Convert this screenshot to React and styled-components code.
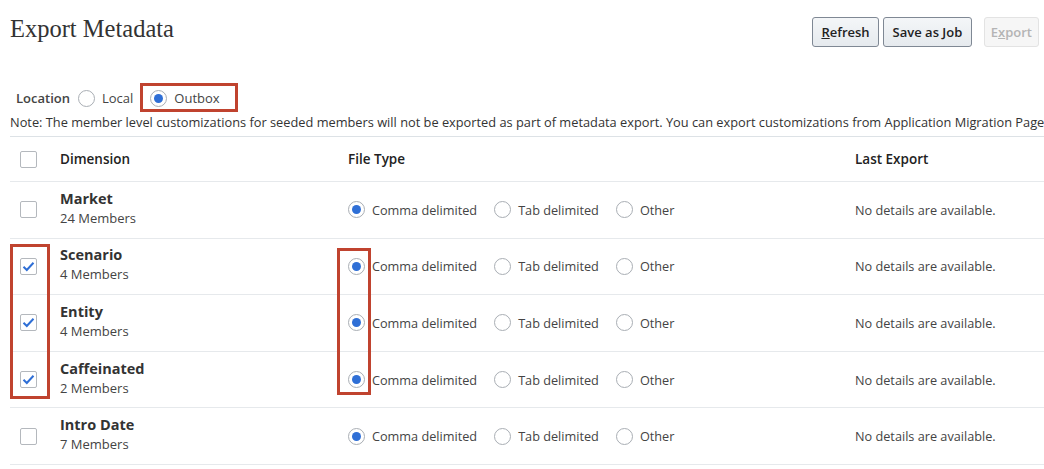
import React from "react";
import styled, { createGlobalStyle } from "styled-components";

const GlobalStyle = createGlobalStyle`
  body {
    margin: 0;
    background: #fff;
    font-family: "Open Sans", "Noto Sans", sans-serif;
    color: #333;
  }
`;

const Page = styled.div`
  width: 1044px;
  padding: 0 0 0 10px;
  box-sizing: border-box;
`;

const Header = styled.div`
  display: flex;
  justify-content: space-between;
  align-items: flex-start;
  height: 82px;
  padding-top: 12px;
  box-sizing: border-box;
`;

const Title = styled.h1`
  margin: 2px 0 0;
  font-family: "Liberation Serif", "DejaVu Serif", serif;
  font-weight: normal;
  font-size: 24.5px;
  color: #333;
  line-height: 30px;
`;

const Toolbar = styled.div`
  display: flex;
  gap: 4px;
  padding-top: 5px;
  padding-right: 5px;
`;

const Button = styled.button`
  height: 30px;
  padding: 0 ${({ disabled }) => (disabled ? 6 : 8.5)}px;
  font-family: "Open Sans", sans-serif;
  font-size: 13px;
  font-weight: 600;
  border-radius: 3px;
  border: 1px solid ${({ disabled }) => (disabled ? "#e3e3e3" : "#7f8894")};
  background: ${({ disabled }) =>
    disabled ? "#f6f6f6" : "linear-gradient(#f4f6f8, #e6eaee)"};
  color: ${({ disabled }) => (disabled ? "#b4b4b4" : "#222")};
  margin-left: ${({ gapLeft }) => gapLeft || 0}px;
  cursor: pointer;
`;

const LocationRow = styled.div`
  display: flex;
  align-items: center;
  height: 32px;
  padding-left: 6px;
  font-size: 13px;
`;

const Label = styled.span`
  font-weight: 600;
  color: #444;
  margin-right: 8px;
`;

const Option = styled.label`
  position: relative;
  display: flex;
  align-items: center;
  gap: 7px;
  color: #444;
  margin-right: ${({ mr }) => mr || 0}px;
`;

const RadioCircle = styled.span`
  width: 15px;
  height: 15px;
  border-radius: 50%;
  border: 1px solid #a9aeb4;
  background: #fff;
  display: flex;
  align-items: center;
  justify-content: center;
  flex-shrink: 0;
  &::after {
    content: "";
    width: 9px;
    height: 9px;
    border-radius: 50%;
    background: ${({ checked }) => (checked ? "#2f6fd6" : "transparent")};
  }
`;

const Highlight = styled.span`
  position: absolute;
  border: 3px solid #c0432f;
  pointer-events: none;
`;

const Note = styled.div`
  font-size: 12.8px;
  color: #333;
  line-height: 16px;
  padding-bottom: 6px;
  white-space: nowrap;
  border-bottom: 1px solid #dde2e6;
`;

const Table = styled.div`
  position: relative;
`;

const Row = styled.div`
  display: grid;
  grid-template-columns: 40px 287px 508px 1fr;
  align-items: center;
  box-sizing: border-box;
  height: ${({ head }) => (head ? 45 : 56.6)}px;
  border-bottom: 1px solid #e6e9ec;
`;

const Cell = styled.div`
  padding-left: ${({ pl }) => pl || 0}px;
  display: flex;
  flex-direction: column;
`;

const Box = styled.span`
  width: 15px;
  height: 15px;
  border: 1px solid #b4b8bd;
  border-radius: 2px;
  background: #fff;
  display: flex;
  align-items: center;
  justify-content: center;
`;

const HeadText = styled.span`
  font-size: 13.5px;
  font-weight: 600;
  color: #222;
`;

const Name = styled.span`
  font-size: 14.5px;
  font-weight: 700;
  color: #333;
  line-height: 19px;
  margin-top: -3px;
`;

const Members = styled.span`
  font-size: 13px;
  color: #444;
  line-height: 19px;
  margin-top: 1px;
`;

const Radios = styled.div`
  display: flex;
  align-items: center;
  font-size: 12.7px;
`;

const Details = styled.span`
  font-size: 12.7px;
  color: #444;
`;

const Checkbox = ({ checked }) => (
  <Box>
    {checked && (
      <svg width="13" height="11" viewBox="0 0 13 11">
        <path
          d="M1.5 5.8 L4.8 9 L11.5 1.8"
          fill="none"
          stroke="#2f6fd6"
          strokeWidth="2"
        />
      </svg>
    )}
  </Box>
);

const rows = [
  { name: "Market", members: "24 Members", checked: false },
  { name: "Scenario", members: "4 Members", checked: true },
  { name: "Entity", members: "4 Members", checked: true },
  { name: "Caffeinated", members: "2 Members", checked: true },
  { name: "Intro Date", members: "7 Members", checked: false },
];

export default function App() {
  return (
    <>
      <GlobalStyle />
      <Page>
        <Header>
          <Title>Export Metadata</Title>
          <Toolbar>
            <Button>
              <u>R</u>efresh
            </Button>
            <Button>Save as Job</Button>
            <Button disabled gapLeft={8}>
              E<u>x</u>port
            </Button>
          </Toolbar>
        </Header>
        <LocationRow>
          <Label>Location</Label>
          <Option mr={17}>
            <RadioCircle />
            Local
          </Option>
          <Option>
            <Highlight style={{ left: -10, top: -6, width: 92, height: 23 }} />
            <RadioCircle checked />
            Outbox
          </Option>
        </LocationRow>
        <Note>
          Note: The member level customizations for seeded members will not be
          exported as part of metadata export. You can export customizations
          from Application Migration Page
        </Note>
        <Table>
          <Row head>
            <Cell pl={10}>
              <Checkbox />
            </Cell>
            <Cell pl={10}>
              <HeadText>Dimension</HeadText>
            </Cell>
            <Cell pl={11}>
              <HeadText>File Type</HeadText>
            </Cell>
            <Cell pl={10}>
              <HeadText>Last Export</HeadText>
            </Cell>
          </Row>
          {rows.map((r) => (
            <Row key={r.name}>
              <Cell pl={10}>
                <Checkbox checked={r.checked} />
              </Cell>
              <Cell pl={10}>
                <Name>{r.name}</Name>
                <Members>{r.members}</Members>
              </Cell>
              <Cell pl={11}>
                <Radios>
                  <Option mr={17}>
                    <RadioCircle checked />
                    Comma delimited
                  </Option>
                  <Option mr={17}>
                    <RadioCircle />
                    Tab delimited
                  </Option>
                  <Option>
                    <RadioCircle />
                    Other
                  </Option>
                </Radios>
              </Cell>
              <Cell pl={10}>
                <Details>No details are available.</Details>
              </Cell>
            </Row>
          ))}
          <Highlight style={{ left: 0, top: 107, width: 34, height: 149 }} />
          <Highlight style={{ left: 327, top: 111, width: 28, height: 141 }} />
        </Table>
      </Page>
    </>
  );
}
